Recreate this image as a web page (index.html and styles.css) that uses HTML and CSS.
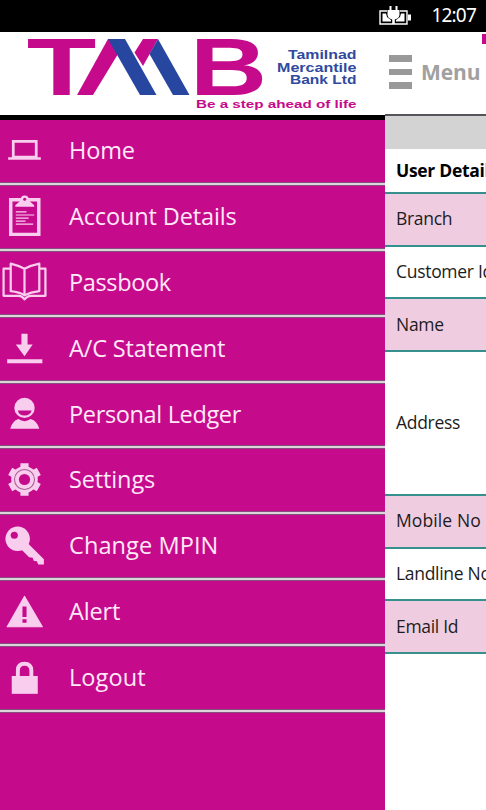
FILE: index.html
```html
<!DOCTYPE html>
<html lang="en">
<head>
    <meta charset="UTF-8">
    <meta name="viewport" content="width=device-width, initial-scale=1.0">
    <title>TMB Mobile Banking</title>
    <link rel="stylesheet" href="styles.css">
</head>
<body>
    <!-- Status bar -->
    <div class="status-bar">
        <svg class="battery" width="33" height="20" viewBox="0 0 33 20">
            <path d="M8 5H1V18H28V5H21" fill="none" stroke="#fff" stroke-width="1.400"/>
            <path d="M3.500 7.500H7L8 11L12 14V15.500H3.500ZM25.500 7.500H22L21 11L17 14V15.500H25.500Z" fill="#fff"/>
            <path d="M29 8.500H32V14.500H29Z" fill="#fff"/>
            <path d="M10.500 0H12.500V4H16.500V0H18.500V4H20.500V9Q20 12.500 15.800 13.500V18H13.200V13.500Q9 12.500 8.500 9V4H10.500Z" fill="#fff"/>
        </svg>
        <span class="clock">12:07</span>
    </div>

    <div class="app">
        <!-- Side menu -->
        <div class="sidebar">
            <div class="logo">
                <svg width="385" height="82" viewBox="0 0 385 82">
                    <text class="logo-letter" transform="translate(26.700 63) scale(1.4 1)">T</text>
                    <g fill="#c60a8c">
                        <path d="M108 7H121L118 22L93 63H77Z"/>
                        <path d="M143 7H158L143 34L134.500 20.500Z"/>
                    </g>
                    <g fill="#2746a0">
                        <path d="M108 7H125L156.500 63H140Z"/>
                        <path d="M158 7L189.500 63H173L149.500 22Z"/>
                    </g>
                    <text class="logo-letter" transform="translate(190 63) scale(1.31 1)">B</text>
                    <g class="logo-name">
                        <text x="288" y="27" textLength="68.500" lengthAdjust="spacingAndGlyphs">Tamilnad</text>
                        <text x="277" y="39.700" textLength="79.500" lengthAdjust="spacingAndGlyphs">Mercantile</text>
                        <text x="290" y="52.300" textLength="66.500" lengthAdjust="spacingAndGlyphs">Bank Ltd</text>
                    </g>
                    <text class="logo-tag" x="196" y="76" textLength="160.500" lengthAdjust="spacingAndGlyphs">Be a step ahead of life</text>
                </svg>
            </div>
            <ul class="menu">
                <li class="menu-item">
                    <svg class="icon" viewBox="0 0 48 48">
                        <path d="M13 16H35.500V31.500H13Z" fill="none" stroke="#f9cdee" stroke-width="2.700"/>
                        <path d="M8 31.500H40V34H8Z"/>
                    </svg>
                    <span>Home</span>
                </li>
                <li class="menu-item">
                    <svg class="icon" viewBox="0 0 48 48">
                        <path d="M10.500 8.500H38V42.500H10.500Z" fill="none" stroke="#f9cdee" stroke-width="3.400"/>
                        <path d="M15 15.500V14L20 9.500Q20 4.500 24.200 4.500T28.500 9.500L33.500 14V15.500Z"/>
                        <circle cx="24.200" cy="8" r="1.500" fill="#c60a8c"/>
                        <path d="M15.500 20.500H26M15.500 23.500H33.500M15.500 26.500H28M15.500 29.500H25M15.500 32.500H32.500" fill="none" stroke="#f9cdee" stroke-width="1.200"/>
                    </svg>
                    <span>Account Details</span>
                </li>
                <li class="menu-item tight">
                    <svg class="icon" viewBox="0 0 48 48">
                        <g fill="none" stroke="#f9cdee" stroke-width="2.200" stroke-linejoin="round">
                            <path d="M24 11.500Q17 8 10.500 6.500V33.500Q19 34.500 24 37.500Q30 34.500 38.500 33.500V6.500Q31 8 24 11.500Z"/>
                            <path d="M24 12V37.500"/>
                            <path d="M10.500 11.500H3.500V38H18.500Q21.500 38 24 41.500Q27 38 30 38H44.500V11.500H38.500"/>
                        </g>
                    </svg>
                    <span>Passbook</span>
                </li>
                <li class="menu-item">
                    <svg class="icon" viewBox="0 0 48 48">
                        <path d="M21 10.500H27V21H32L24 32.500L15.500 21H21Z"/>
                        <path d="M7 35.500H41.500V39.500H7Z"/>
                    </svg>
                    <span>A/C Statement</span>
                </li>
                <li class="menu-item tight">
                    <svg class="icon" viewBox="0 0 48 48">
                        <circle cx="24" cy="18.500" r="10"/>
                        <path d="M17.500 21H31Q29.500 26 24 26T17.500 21Z" fill="#c60a8c"/>
                        <path d="M10 39Q12 31.500 18 29.500Q24 33.500 30 29.500Q36.500 31.500 38.500 39Z"/>
                    </svg>
                    <span>Personal Ledger</span>
                </li>
                <li class="menu-item">
                    <svg class="icon" viewBox="0 0 48 48">
                        <circle cx="24" cy="24" r="13"/>
                        <path d="M24 8V40M10 16L38 32M10 32L38 16" fill="none" stroke="#f9cdee" stroke-width="8"/>
                        <circle cx="24" cy="24" r="9.800" fill="none" stroke="#a85c96" stroke-width="1"/>
                        <circle cx="24" cy="24" r="5.500" fill="#c60a8c"/>
                    </svg>
                    <span>Settings</span>
                </li>
                <li class="menu-item">
                    <svg class="icon" viewBox="0 0 48 48">
                        <circle cx="17.300" cy="17.500" r="12"/>
                        <circle cx="14" cy="14" r="3.500" fill="#c60a8c"/>
                        <path d="M20 27L27 21.500L43 37.500V42.500H37.500L36 39.500L33 39L32 36L28.500 35.500Z"/>
                    </svg>
                    <span class="wide">Change MPIN</span>
                </li>
                <li class="menu-item">
                    <svg class="icon" viewBox="0 0 48 48">
                        <path d="M24 9L41.500 39H7Z" stroke="#f9cdee" stroke-linejoin="round"/>
                        <path d="M22 19H26V29.500H22ZM22 31.500H26V35H22Z" fill="#c60a8c"/>
                    </svg>
                    <span>Alert</span>
                </li>
                <li class="menu-item">
                    <svg class="icon" viewBox="0 0 48 48">
                        <path d="M17.500 24V17Q17.500 10.500 24 10.500T30.700 17V24" fill="none" stroke="#f9cdee" stroke-width="3.800"/>
                        <path d="M11.500 22.500H37V40H11.500Z"/>
                    </svg>
                    <span class="wide">Logout</span>
                </li>
            </ul>
        </div>

        <!-- Page behind the menu -->
        <div class="content">
            <div class="topbar">
                <div class="hamburger"><i></i><i></i><i></i></div>
                <span class="menu-label">Menu</span>
                <span class="badge"></span>
            </div>
            <div class="band"></div>
            <div class="details">
                <div class="row title">User Details</div>
                <div class="row pink">Branch</div>
                <div class="row">Customer Id</div>
                <div class="row pink">Name</div>
                <div class="row address">Address</div>
                <div class="row pink wide">Mobile No</div>
                <div class="row">Landline No</div>
                <div class="row pink">Email Id</div>
            </div>
        </div>
    </div>
</body>
</html>
```
FILE: styles.css
```css
* {
    margin: 0;
    padding: 0;
    box-sizing: border-box;
}

body {
    width: 486px;
    height: 810px;
    font-family: 'Open Sans', 'Noto Sans', sans-serif;
    background-color: #fff;
    overflow: hidden;
}

.status-bar {
    height: 32px;
    background-color: #000;
    color: #fff;
    display: flex;
    justify-content: flex-end;
    align-items: center;
    gap: 19px;
    padding-right: 10px;
}

.battery {
    margin-top: -1px;
}

.clock {
    font-family: 'Noto Sans', sans-serif;
    font-size: 19px;
    letter-spacing: -0.8px;
    margin-top: -2px;
}

.app {
    display: flex;
    height: 778px;
}

.sidebar {
    width: 385px;
    flex-shrink: 0;
    background-color: #c60a8c;
}

.logo {
    height: 88px;
    background-color: #fff;
    border-bottom: 5px solid #000;
    overflow: hidden;
}

.logo svg {
    display: block;
}

.logo-letter {
    font: bold 81.4px 'Liberation Sans', sans-serif;
    fill: #c60a8c;
}

.logo-name {
    font: bold 13px 'Liberation Sans', sans-serif;
    fill: #2f4a9e;
}

.logo-tag {
    font: bold 11.5px 'Liberation Sans', sans-serif;
    fill: #c60a8c;
}

.menu {
    list-style: none;
}

.menu-item {
    height: 65.9px;
    display: flex;
    align-items: center;
    gap: 20px;
    font-size: 23.5px;
    letter-spacing: -0.13px;
    color: #ffe9fa;
    white-space: nowrap;
    border-bottom: 1px solid #85507c;
    box-shadow: inset 0 -2px #dcd6dc, inset 0 -3px #85507c;
    padding-bottom: 5px;
}

.tight {
    letter-spacing: -0.35px;
}

.icon {
    width: 49px;
    height: 49px;
    fill: #f9cdee;
    flex-shrink: 0;
}

.content {
    flex: 1;
    min-width: 0;
    overflow: hidden;
    background-color: #fff;
}

.topbar {
    height: 84px;
    display: flex;
    align-items: center;
    gap: 9px;
    padding-left: 4px;
    border-bottom: 2px solid #55565c;
    position: relative;
}

.hamburger {
    display: flex;
    flex-direction: column;
    gap: 7px;
    margin-top: -2px;
}

.hamburger i {
    width: 23px;
    height: 6.5px;
    background-color: #999;
}

.menu-label {
    font-size: 21px;
    font-weight: bold;
    color: #a0a0a0;
    letter-spacing: -0.1px;
    margin-top: -3px;
}

.badge {
    position: absolute;
    top: 2px;
    right: 0;
    width: 4px;
    height: 10px;
    background-color: #c60a8c;
}

.band {
    height: 33px;
    background-color: #d3d3d3;
}

.row {
    height: 52.7px;
    padding: 0 0 2px 11px;
    display: flex;
    align-items: center;
    white-space: nowrap;
    font-size: 17.5px;
    letter-spacing: -0.3px;
    color: #1c1c1c;
    border-bottom: 2px solid #36918e;
}

.title {
    height: 45px;
    font-weight: bold;
    color: #000;
}

.wide {
    letter-spacing: 0.1px;
}

.pink {
    background-color: #f0cce1;
}

.address {
    height: 144px;
}
```
